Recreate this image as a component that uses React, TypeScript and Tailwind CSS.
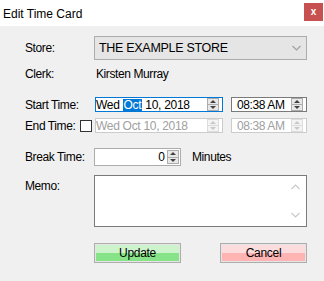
import React from "react";

const font = { fontFamily: '"Liberation Sans", Arial, sans-serif' };

const Spin: React.FC<{ disabled?: boolean; h?: string }> = ({ disabled, h = "h-[13px]" }) => {
  const c = disabled ? "#c8c8c8" : "#404040";
  return (
    <div className={`flex flex-col shrink-0 w-[12px] ${h} border ${disabled ? "border-[#dcdcdc] bg-[#f4f4f4]" : "border-[#acacac] bg-[#e8e8e8]"}`}>
      <div className="flex-1 flex items-center justify-center">
        <svg width="6" height="3" viewBox="0 0 6 3"><path d="M0 3 L3 0 L6 3Z" fill={c} /></svg>
      </div>
      <div className={`h-px ${disabled ? "bg-[#dcdcdc]" : "bg-[#acacac]"}`} />
      <div className="flex-1 flex items-center justify-center">
        <svg width="6" height="3" viewBox="0 0 6 3"><path d="M0 0 L3 3 L6 0Z" fill={c} /></svg>
      </div>
    </div>
  );
};

const Chevron: React.FC<{ up?: boolean; color?: string }> = ({ up, color = "#a0a0a0" }) => (
  <svg width="9" height="6" viewBox="0 0 9 6">
    <path d={up ? "M0.5 5 L4.5 1 L8.5 5" : "M0.5 1 L4.5 5 L8.5 1"} fill="none" stroke={color} strokeWidth="1.1" />
  </svg>
);

const App: React.FC = () => {
  const text = "shrink-0 whitespace-nowrap text-[12px] tracking-[-0.4px] text-black";
  const label = `w-[70px] ${text}`;
  return (
    <div className="w-[324px] h-[281px] bg-[#f0f0f0] flex flex-col" style={font}>
      <div className="h-[26px] bg-white flex items-start justify-between shrink-0">
        <span className="text-[12px] text-black pl-[3px] pt-[5px]">Edit Time Card</span>
        <div className="w-[19px] h-[18px] mt-[3px] mr-[1px] bg-[#c75050] flex items-center justify-center text-white text-[10px] font-bold leading-none">
          x
        </div>
      </div>

      <div className="flex flex-col pl-[25px] pr-[17px]">
        <div className="flex items-center mt-[10px] h-[24px]">
          <span className={label}>Store:</span>
          <div className="ml-[-1px] flex-1 h-full border border-[#acacac] bg-[#e5e5e5] flex items-center justify-between pl-[4px] pr-[5px]">
            <span className="whitespace-nowrap text-[12.5px] tracking-[-0.3px]">THE EXAMPLE STORE</span>
            <Chevron />
          </div>
        </div>

        <div className="flex items-center mt-[2px] h-[24px]">
          <span className={label}>Clerk:</span>
          <span className={`pl-[1px] ${text}`}>Kirsten Murray</span>
        </div>

        <div className="flex items-center mt-[11px] h-[15px]">
          <span className={label}>Start Time:</span>
          <div className="w-[128px] shrink-0 h-full border border-[#0078d7] bg-white flex items-center justify-between pr-[3px]">
            <span className="flex items-center whitespace-nowrap text-[12px] tracking-[-0.3px] leading-none">
              <span>Wed</span>
              <span className="ml-[3px] px-px bg-[#0078d7] text-white">Oct</span>
              <span className="ml-[3px]">10, 2018</span>
            </span>
            <Spin />
          </div>
          <div className="ml-[8px] flex-1 h-full border border-[#7a7a7a] bg-white flex items-center justify-between pl-[5px] pr-[3px]">
            <span className="whitespace-nowrap text-[12px] tracking-[-0.4px] leading-none">08:38 AM</span>
            <Spin />
          </div>
        </div>

        <div className="flex items-center mt-[6px] h-[15px]">
          <span className={`w-[55px] ${text}`}>End Time:</span>
          <div className="w-[12px] h-[12px] shrink-0 border border-[#333] bg-white mr-[3px]" />
          <div className="w-[128px] shrink-0 h-full border border-[#cccccc] bg-white flex items-center justify-between pr-[3px]">
            <span className="whitespace-nowrap text-[12px] tracking-[-0.3px] leading-none text-[#a0a0a0]">Wed Oct 10, 2018</span>
            <Spin disabled />
          </div>
          <div className="ml-[8px] flex-1 h-full border border-[#cccccc] bg-white flex items-center justify-between pl-[5px] pr-[3px]">
            <span className="whitespace-nowrap text-[12px] tracking-[-0.4px] leading-none text-[#a0a0a0]">08:38 AM</span>
            <Spin disabled />
          </div>
        </div>

        <div className="flex items-center mt-[15px] h-[18px]">
          <span className={label}>Break Time:</span>
          <div className="ml-[-1px] w-[87px] shrink-0 h-full border border-[#acacac] bg-white flex items-center justify-end pr-[1px]">
            <span className="text-[12px] leading-none mr-[2px]">0</span>
            <Spin h="h-[14px]" />
          </div>
          <span className={`ml-[11px] ${text}`}>Minutes</span>
        </div>

        <div className="flex items-start mt-[9px] h-[52px]">
          <span className={`${label} pt-[2px]`}>Memo:</span>
          <div className="ml-[-1px] flex-1 h-full border border-[#7a7a7a] bg-white flex flex-col items-end justify-between pr-[6px] py-[8px]">
            <Chevron up color="#c8c8c8" />
            <Chevron color="#c8c8c8" />
          </div>
        </div>

        <div className="flex items-center justify-between mt-[16px] pl-[69px]">
          <button className="w-[87px] h-[20px] border border-[#adadad] p-px bg-[#e5e5e5]">
            <div className="w-full h-full flex flex-col relative">
              <div className="flex-1 bg-[#cdf3cd]" />
              <div className="flex-1 bg-[#87e387]" />
              <span className="absolute inset-0 flex items-center justify-center text-[12px] tracking-[-0.3px] text-black">
                Update
              </span>
            </div>
          </button>
          <button className="w-[87px] h-[20px] border border-[#adadad] p-px bg-[#e5e5e5]">
            <div className="w-full h-full flex flex-col relative">
              <div className="flex-1 bg-[#fcdcdc]" />
              <div className="flex-1 bg-[#ffb4b4]" />
              <span className="absolute inset-0 flex items-center justify-center text-[12px] tracking-[-0.3px] text-black">
                Cancel
              </span>
            </div>
          </button>
        </div>
      </div>
    </div>
  );
};

export default App;
